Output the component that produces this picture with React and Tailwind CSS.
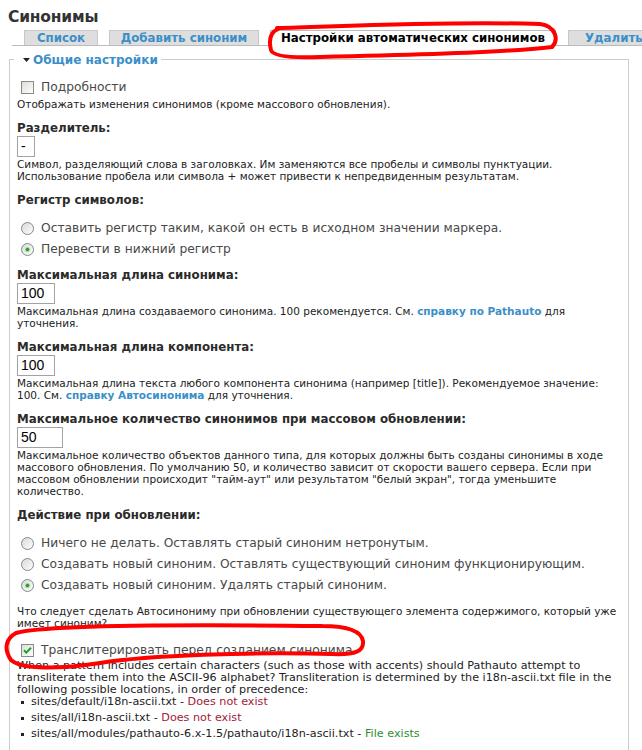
import React from 'react';

const font = "font-['Verdana','DejaVu_Sans',sans-serif]";

function Heading({ children, className = '' }) {
  return (
    <div className={`text-[11.8px] font-bold leading-[15px] text-[#2b2b2b] ${className}`}>{children}</div>
  );
}

function Desc({ children, className = '' }) {
  return (
    <div className={`text-[10.5px] leading-[12px] text-[#222] whitespace-nowrap ${className}`}>{children}</div>
  );
}

function TextInput({ value, width }) {
  return (
    <div
      className={`h-[21px] ${width} border border-[#a3a3a3] bg-white px-[3px] text-[14px] leading-[19px] text-black font-['Liberation_Sans',Arial,sans-serif]`}
    >
      {value}
    </div>
  );
}

function CheckBox({ checked }) {
  return (
    <svg width="13" height="13" viewBox="0 0 13 13" className="shrink-0">
      <defs>
        <linearGradient id="cbg" x1="0" y1="0" x2="1" y2="1">
          <stop offset="0" stopColor="#dcdcd7" />
          <stop offset="1" stopColor="#ffffff" />
        </linearGradient>
      </defs>
      <rect x="0.5" y="0.5" width="12" height="12" fill="url(#cbg)" stroke="#8a8a8a" />
      {checked && (
        <path d="M3 6.2 L5.3 8.6 L10 3.8" fill="none" stroke="#21a121" strokeWidth="2" />
      )}
    </svg>
  );
}

function Radio({ checked }) {
  return (
    <svg width="13" height="13" viewBox="0 0 13 13" className="shrink-0">
      <defs>
        <linearGradient id="rbg" x1="0" y1="0" x2="1" y2="1">
          <stop offset="0" stopColor="#d8d8d3" />
          <stop offset="1" stopColor="#ffffff" />
        </linearGradient>
      </defs>
      <circle cx="6.5" cy="6.5" r="6" fill="url(#rbg)" stroke="#7f8a95" />
      {checked && (
        <>
          <circle cx="6.5" cy="6.5" r="2.6" fill="#9fe09f" />
          <circle cx="6.5" cy="6.5" r="1.7" fill="#2a9d2a" />
        </>
      )}
    </svg>
  );
}

function Option({ checked, children, type = 'radio' }) {
  const h = type === 'radio' ? 'h-[21px]' : 'h-[19px]';
  return (
    <label className={`flex items-center ${h} pl-[4px] gap-[7px] text-[12.25px] text-[#494949] whitespace-nowrap`}>
      {type === 'radio' ? <Radio checked={checked} /> : <CheckBox checked={checked} />}
      <span>{children}</span>
    </label>
  );
}

const link = 'font-bold text-[#3b8fc8]';
const tab = 'h-[15px] shrink-0 border border-b-0 border-[#c8c8c8] bg-[#dedede] leading-[14px] text-center text-[#3b8fc8] whitespace-nowrap';

export default function App() {
  return (
    <div className={`relative w-[642px] h-[750px] overflow-hidden bg-white ${font}`}>
      <div className="pl-2 pt-[6px]">
        <h2 className="text-[15.5px] font-bold leading-[22px] tracking-[-0.2px] text-[#333]">Синонимы</h2>

        {/* Tabs */}
        <ul className="flex items-end gap-[11px] ml-1 mt-[2px] pl-3 h-[16px] border-b border-[#bbbbbb] text-[11.8px] font-bold">
          <li className={`${tab} w-[74px]`}>Список</li>
          <li className={`${tab} w-[150px]`}>Добавить синоним</li>
          <li className="h-[16px] w-[286px] shrink-0 -mb-px border border-b-0 border-[#bbbbbb] bg-white leading-[15px] text-center text-black whitespace-nowrap">
            Настройки автоматических синонимов
          </li>
          <li className={`${tab} ml-px pl-[16px] text-left w-[140px]`}>Удалить синонимы</li>
        </ul>

        {/* Fieldset */}
        <fieldset className="ml-px mt-[4px] w-[620px] h-[760px] border border-[#cccccc] pl-[7px] pr-2">
          <legend className="-ml-[3px] pl-[9px] pr-[3px] text-[12px] font-bold leading-[16px] text-[#3b8fc8]">
            <span className="inline-flex items-center gap-[3px]">
              <svg width="7" height="4" viewBox="0 0 7 4"><path d="M0 0 H7 L3.5 4 Z" fill="#222" /></svg>
              Общие настройки
            </span>
          </legend>

          <div className="mt-[10px]">
            <Option type="checkbox">Подробности</Option>
            <Desc className="mt-[1px]">Отображать изменения синонимов (кроме массового обновления).</Desc>
          </div>

          <div className="mt-[11px]">
            <Heading>Разделитель:</Heading>
            <TextInput value="-" width="w-[18px]" />
            <Desc className="mt-[1px]">
              Символ, разделяющий слова в заголовках. Им заменяются все пробелы и символы пунктуации.<br />
              Использование пробела или символа + может привести к непредвиденным результатам.
            </Desc>
          </div>

          <div className="mt-[11px]">
            <Heading>Регистр символов:</Heading>
            <div className="mt-[10px]">
              <Option>Оставить регистр таким, какой он есть в исходном значении маркера.</Option>
              <Option checked>Перевести в нижний регистр</Option>
            </div>
          </div>

          <div className="mt-[8px]">
            <Heading>Максимальная длина синонима:</Heading>
            <TextInput value="100" width="w-[38px]" />
            <Desc className="mt-[1px]">
              Максимальная длина создаваемого синонима. 100 рекомендуется. См. <span className={link}>справку по Pathauto</span> для<br />
              уточнения.
            </Desc>
          </div>

          <div className="mt-[11px]">
            <Heading>Максимальная длина компонента:</Heading>
            <TextInput value="100" width="w-[38px]" />
            <Desc className="mt-[1px]">
              Максимальная длина текста любого компонента синонима (например [title]). Рекомендуемое значение:<br />
              100. См. <span className={link}>справку Автосинонима</span> для уточнения.
            </Desc>
          </div>

          <div className="mt-[11px]">
            <Heading>Максимальное количество синонимов при массовом обновлении:</Heading>
            <TextInput value="50" width="w-[46px]" />
            <Desc className="mt-[1px]">
              Максимальное количество объектов данного типа, для которых должны быть созданы синонимы в ходе<br />
              массового обновления. По умолчанию 50, и количество зависит от скорости вашего сервера. Если при<br />
              массовом обновлении происходит "тайм-аут" или результатом "белый экран", тогда уменьшите<br />
              количество.
            </Desc>
          </div>

          <div className="mt-[11px]">
            <Heading>Действие при обновлении:</Heading>
            <div className="mt-[10px]">
              <Option>Ничего не делать. Оставлять старый синоним нетронутым.</Option>
              <Option>Создавать новый синоним. Оставлять существующий синоним функционирующим.</Option>
              <Option checked>Создавать новый синоним. Удалять старый синоним.</Option>
            </div>
            <Desc className="mt-[9px]">
              Что следует сделать Автосинониму при обновлении существующего элемента содержимого, который уже<br />
              имеет синоним?
            </Desc>
          </div>

          <div className="mt-[12px]">
            <Option type="checkbox" checked>Транслитерировать перед созданием синонима</Option>
            <Desc className="text-[11.2px] leading-[12.5px]">
              When a pattern includes certain characters (such as those with accents) should Pathauto attempt to<br />
              transliterate them into the ASCII-96 alphabet? Transliteration is determined by the i18n-ascii.txt file in the<br />
              following possible locations, in order of precedence:
            </Desc>
            <ul className="-mt-[2px] text-[11.2px] text-[#222]">
              {[
                ['sites/default/i18n-ascii.txt', 'Does not exist', 'text-[#a3213a]'],
                ['sites/all/i18n-ascii.txt', 'Does not exist', 'text-[#a3213a]'],
                ['sites/all/modules/pathauto-6.x-1.5/pathauto/i18n-ascii.txt', 'File exists', 'text-[#2f8f2f]'],
              ].map(([path, status, color]) => (
                <li key={path} className="flex items-center h-[16px] pl-[4px] whitespace-nowrap">
                  <span className="w-[3px] h-[3px] bg-[#222] mr-[7px]" />
                  {path}&nbsp;-&nbsp;<span className={color}>{status}</span>
                </li>
              ))}
            </ul>
          </div>
        </fieldset>
      </div>

      {/* Red hand-drawn annotations */}
      <svg className="absolute inset-0 pointer-events-none" width="642" height="750" viewBox="0 0 642 750">
        <defs>
          <filter id="soft" x="-5%" y="-50%" width="110%" height="200%">
            <feGaussianBlur stdDeviation="0.7" />
          </filter>
        </defs>
        <g fill="none" stroke="#ff0000" strokeWidth="4" strokeLinecap="round" strokeLinejoin="round" filter="url(#soft)">
          <path d="M277 28 C350 26 450 21 540 24 C556 26 559 40 552 47 C520 51 420 55 320 57 C295 58 273 57 271 50 C269 42 269 33 278 29" />
          <path d="M322 626 C345 626 361 630 363 641 C364 651 356 655 332 654 C250 652 150 655 100 663 C60 669 22 670 11 660 C4 650 5 639 16 633 C40 626 150 624 322 626" />
        </g>
      </svg>
    </div>
  );
}
